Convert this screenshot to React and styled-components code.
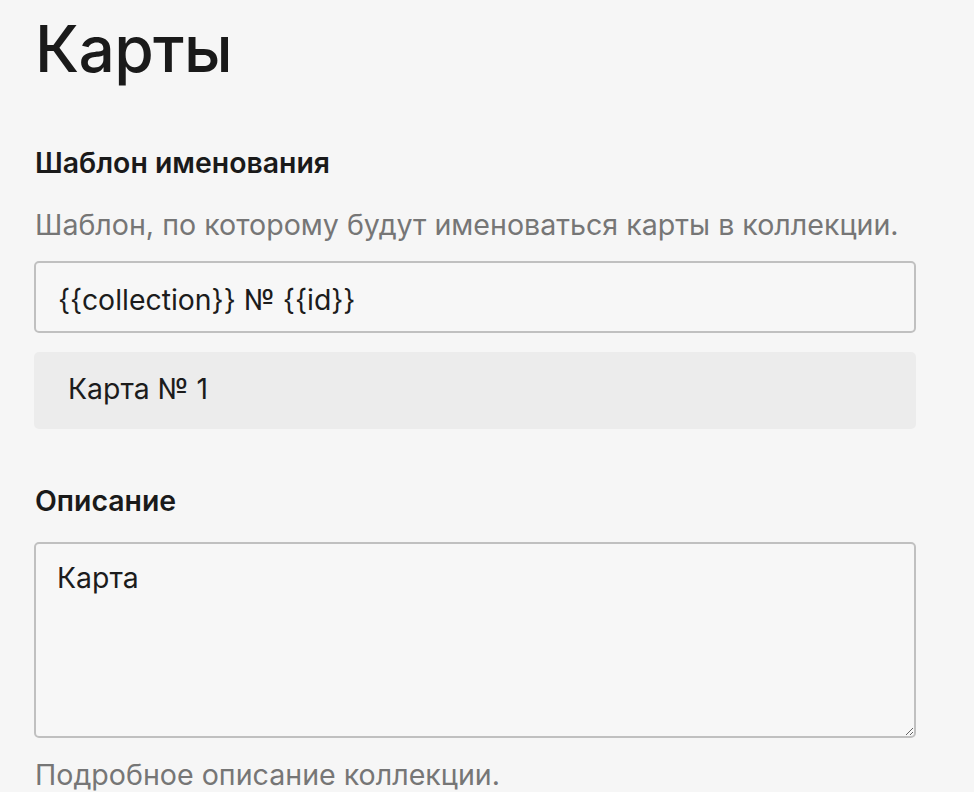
import React from "react";
import styled, { createGlobalStyle } from "styled-components";

const Global = createGlobalStyle`
  html, body { margin: 0; padding: 0; background: #f6f6f6; }
  body { font-family: Inter, "Noto Sans", sans-serif; color: #1c1c1c; }
  * { box-sizing: border-box; }
`;

const Page = styled.div`
  padding: 11px 58px 0 34px;
  width: 974px;
`;

const Title = styled.h1`
  margin: 0 0 0 1px;
  font-size: 64px;
  font-weight: 500;
  line-height: 76px;
  letter-spacing: -0.6px;
  color: #1a1a1a;
`;

const Field = styled.section`
  display: flex;
  flex-direction: column;
  margin-top: ${(p) => p.$top}px;
`;

const Label = styled.label`
  font-size: 28.4px;
  font-weight: 600;
  line-height: 34px;
  margin-left: 1px;
  color: #1a1a1a;
`;

const Help = styled.p`
  margin: ${(p) => p.$top}px 0 0 1px;
  font-size: 28.6px;
  line-height: 36px;
  color: #767676;
`;

const Input = styled.input`
  margin-top: 18px;
  height: 72px;
  width: 100%;
  border: 2px solid #c0c0c0;
  border-radius: 5px;
  background: #f7f7f7;
  padding: 4px 22px 0;
  font: inherit;
  font-size: 28.4px;
  color: #1c1c1c;
  outline: none;
`;

const Preview = styled.div`
  margin-top: 19px;
  height: 77px;
  border-radius: 5px;
  background: #ececec;
  padding: 0 34px 4px;
  display: flex;
  align-items: center;
  font-size: 28.4px;
  color: #1c1c1c;
`;

const TextArea = styled.textarea`
  margin-top: 24px;
  height: 196px;
  width: 100%;
  border: 2px solid #c0c0c0;
  border-radius: 5px;
  background: #f7f7f7;
  padding: 16px 21px;
  font: inherit;
  font-size: 28.4px;
  line-height: 36px;
  color: #1c1c1c;
  outline: none;
  resize: vertical;
`;

export default function App() {
  return (
    <Page>
      <Global />
      <Title>Карты</Title>
      <Field $top={59}>
        <Label>Шаблон именования</Label>
        <Help $top={27}>Шаблон, по которому будут именоваться карты в коллекции.</Help>
        <Input defaultValue="{{collection}} № {{id}}" />
        <Preview>Карта № 1</Preview>
      </Field>
      <Field $top={55}>
        <Label>Описание</Label>
        <TextArea defaultValue="Карта" />
        <Help $top={19}>Подробное описание коллекции.</Help>
      </Field>
    </Page>
  );
}
